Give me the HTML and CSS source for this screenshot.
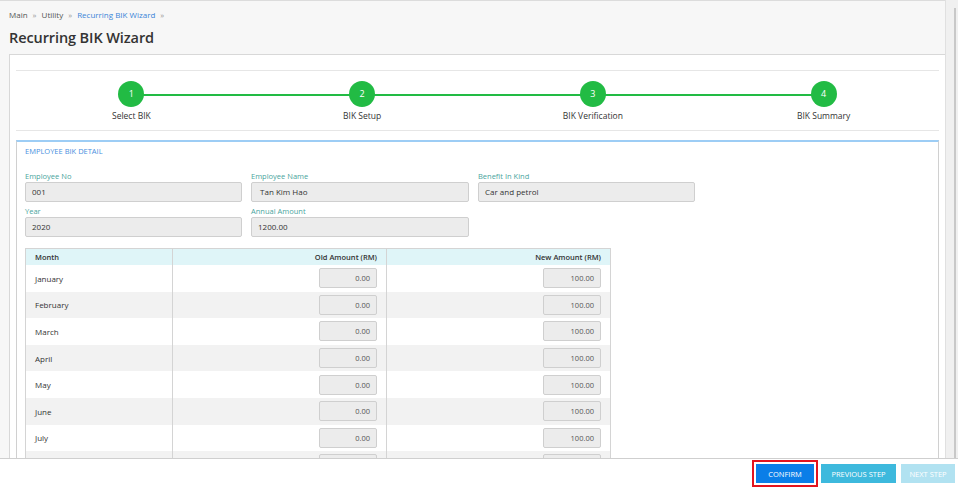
FILE: index.html
```html
<!DOCTYPE html>
<html lang="en">
<head>
    <meta charset="UTF-8">
    <meta name="viewport" content="width=device-width, initial-scale=1.0">
    <title>Recurring BIK Wizard</title>
    <link rel="stylesheet" href="styles.css">
</head>
<body>
    <div class="page">
        <div class="breadcrumb">
            <span>Main</span><span class="sep">&raquo;</span><span>Utility</span><span class="sep">&raquo;</span><span class="current">Recurring BIK Wizard</span><span class="sep">&raquo;</span>
        </div>
        <h1>Recurring BIK Wizard</h1>

        <div class="card">
            <div class="wizard">
                <div class="wizard-line"></div>
                <div class="step"><div class="circle">1</div><div class="step-label">Select BIK</div></div>
                <div class="step"><div class="circle">2</div><div class="step-label">BIK Setup</div></div>
                <div class="step"><div class="circle">3</div><div class="step-label">BIK Verification</div></div>
                <div class="step"><div class="circle">4</div><div class="step-label">BIK Summary</div></div>
            </div>

            <div class="panel">
                <div class="panel-title">EMPLOYEE BIK DETAIL</div>
                <div class="form-grid">
                    <div class="field"><label>Employee No</label><div class="input">001</div></div>
                    <div class="field"><label>Employee Name</label><div class="input">&nbsp;Tan Kim Hao</div></div>
                    <div class="field"><label>Benefit In Kind</label><div class="input">Car and petrol</div></div>
                    <div class="field"><label>Year</label><div class="input">2020</div></div>
                    <div class="field"><label>Annual Amount</label><div class="input">1200.00</div></div>
                </div>

                <table class="bik-table">
                    <thead>
                        <tr><th class="col-month">Month</th><th class="col-old">Old Amount (RM)</th><th class="col-new">New Amount (RM)</th></tr>
                    </thead>
                    <tbody id="month-rows"></tbody>
                </table>
            </div>
        </div>
    </div>

    <div class="scrollbar"></div>

    <div class="footer">
        <div class="confirm-wrap"><button class="btn btn-confirm">CONFIRM</button></div>
        <button class="btn btn-prev">PREVIOUS STEP</button>
        <button class="btn btn-next">NEXT STEP</button>
    </div>

    <script>
        // --- 月別の行を作成 ---
        const months = ['January', 'February', 'March', 'April', 'May', 'June', 'July', 'August'];
        const tbody = document.getElementById('month-rows');
        months.forEach(function(m) {
            const tr = document.createElement('tr');
            tr.innerHTML = '<td>' + m + '</td>' +
                '<td class="num"><div class="cell-input">0.00</div></td>' +
                '<td class="num"><div class="cell-input">100.00</div></td>';
            tbody.appendChild(tr);
        });
    </script>
</body>
</html>
```

FILE: styles.css
```css
html, body { margin: 0; height: 488px; overflow: hidden; }
body { font-family: "Open Sans", "Noto Sans", sans-serif; background-color: #f7f7f7; color: #333; border-top: 1px solid #dcdcdc; box-sizing: border-box; }
.page { padding: 0 12px 0 9px; height: 487px; overflow: hidden; }
.breadcrumb { font-size: 8px; color: #555; padding-top: 8px; height: 12px; line-height: 12px; }
.breadcrumb .sep { color: #999; margin: 0 5px; font-size: 8px; }
.breadcrumb .current { color: #3b86d8; }
h1 { font-size: 14.5px; font-weight: 600; color: #333; margin: 5px 0 0; height: 24px; line-height: 24px; letter-spacing: -0.1px; }
.card { background: #fff; border: 1px solid #d8d8d8; margin-top: 4px; padding: 15px 6px 0; height: 440px; overflow: hidden; }
.wizard { position: relative; display: flex; border-top: 1px solid #e6e6e6; border-bottom: 1px solid #e6e6e6; height: 59px; }
.wizard-line { position: absolute; left: 12.5%; right: 12.5%; top: 23px; height: 2px; background: #22bb44; }
.step { flex: 1; display: flex; flex-direction: column; align-items: center; position: relative; }
.circle { width: 26px; height: 26px; border-radius: 50%; background: #22bb44; color: #fff; font-size: 9px; line-height: 26px; text-align: center; margin-top: 10px; }
.step-label { font-size: 8.5px; color: #333; margin-top: 3px; line-height: 12px; }
.panel { margin-top: 9px; border: 1px solid #d0d0d0; border-top: 2px solid #9dcdf5; padding: 0 8px; height: 400px; }
.panel-title { font-size: 7.5px; color: #4a8fe0; padding: 3px 0 0 0; height: 14px; line-height: 12px; }
.form-grid { display: grid; grid-template-columns: 217px 218px 217px; column-gap: 9px; margin-top: 12px; }
.field label { display: block; font-size: 7.5px; color: #4aa59e; line-height: 10px; height: 10px; margin-bottom: 1px; }
.input { height: 18px; line-height: 18px; background: #ececec; border: 1px solid #cfcfcf; border-radius: 2px; font-size: 8px; color: #333; padding: 0 6px; margin-bottom: 4px; }
.bik-table { border-collapse: collapse; width: 586px; margin-top: 7px; border: 1px solid #d4d4d4; }
.bik-table th { background: #dff5f8; font-size: 7.5px; font-weight: 600; height: 16px; padding: 0 9px; color: #333; }
.bik-table th.col-month { text-align: left; width: 128px; }
.bik-table th.col-old { text-align: right; width: 195px; border-left: 1px solid #d4d4d4; }
.bik-table th.col-new { text-align: right; border-left: 1px solid #d4d4d4; }
.bik-table td { height: 26.6px; padding: 0 9px; font-size: 8px; color: #333; box-sizing: border-box; }
.bik-table td + td { border-left: 1px solid #d4d4d4; }
.bik-table tbody tr:nth-child(even) { background: #f2f2f2; }
.bik-table td.num { text-align: right; }
.cell-input { display: inline-block; width: 44px; height: 18px; line-height: 18px; background: #ececec; border: 1px solid #cfcfcf; border-radius: 2px; padding: 0 6px; text-align: right; font-size: 7.5px; color: #555; vertical-align: middle; }
.scrollbar { position: fixed; top: 0; right: 0; width: 12px; height: 488px; background: #f0f0f0; border-left: 1px solid #e0e0e0; }
.scrollbar::after { content: ""; position: absolute; right: 2px; top: 8px; width: 2px; height: 450px; background: #c8c8c8; }
.footer { position: fixed; left: 0; right: 0; bottom: 0; height: 29px; background: #fff; border-top: 1px solid #cfcfcf; display: flex; justify-content: flex-end; align-items: center; padding-right: 3px; }
.btn { border: none; color: #fff; font-family: "Open Sans", "Noto Sans", sans-serif; font-size: 7.5px; height: 19px; padding: 0; cursor: pointer; }
.confirm-wrap { border: 2px solid #e3141f; padding: 2px; margin-right: 3px; height: 19px; }
.btn-confirm { background: #0a7ee8; width: 58px; display: block; }
.btn-prev { background: #3db9dd; width: 75px; margin-right: 5px; }
.btn-next { background: #b1e2f1; width: 54px; }
```
